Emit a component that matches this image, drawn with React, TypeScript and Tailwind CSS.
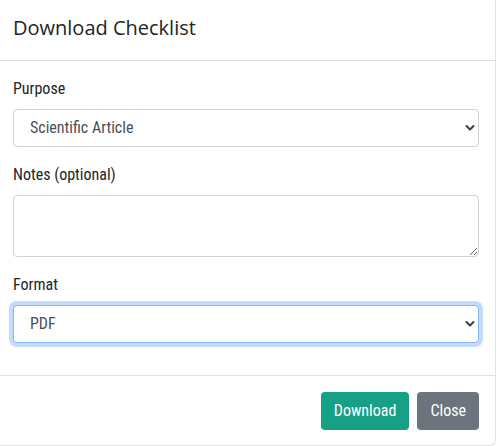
const chevron = (
  <svg className="pointer-events-none absolute right-[4px] top-1/2 -translate-y-1/2" width="10" height="7" viewBox="0 0 10 7" fill="none">
    <path d="M1.5 1.5L5 5l3.5-3.5" stroke="#3c4043" strokeWidth="2" strokeLinecap="round" strokeLinejoin="round" />
  </svg>
);

function Select({ value, focused }: { value: string; focused?: boolean }) {
  return (
    <div className="relative">
      <select
        defaultValue={value}
        className={
          "block h-[38px] w-full appearance-none rounded-[4px] border bg-white pl-4 pr-9 text-base text-[#495057] outline-none " +
          (focused ? "border-[#86b7fe] shadow-[0_0_0_4px_rgba(13,110,253,0.25)]" : "border-[#ced4da]")
        }
      >
        <option>{value}</option>
      </select>
      {chevron}
    </div>
  );
}

export default function App() {
  return (
    <div className="h-[446px] w-[497px] bg-white font-['Roboto_Condensed','Liberation_Sans_Narrow',Roboto,sans-serif] text-[#212529]">
      <div className="h-[446px] w-[496px] rounded-br-[6px] border-r border-b border-[#dee2e6] bg-white">
        <div className="h-[61px] border-b border-[#dee2e6] pt-[13px] pl-[13px]">
          <h5 className="font-['Open_Sans',sans-serif] text-[20px] leading-[30px] font-normal">Download Checklist</h5>
        </div>
        <div className="pt-4 pb-4 pl-[13px] pr-4">
          <div className="mb-4">
            <label className="mb-2 block text-base leading-6">Purpose</label>
            <Select value="Scientific Article" />
          </div>
          <div className="mb-4">
            <label className="mb-2 block text-base leading-6">Notes (optional)</label>
            <textarea className="block h-[62px] w-full rounded-[4px] border border-[#ced4da] bg-white px-3 py-1.5 text-base outline-none" />
          </div>
          <div className="mb-4">
            <label className="mb-2 block text-base leading-6">Format</label>
            <Select value="PDF" focused />
          </div>
        </div>
        <div className="flex justify-end gap-2 border-t border-[#dee2e6] pt-4 pr-4">
          <button className="h-[38px] rounded-[4px] bg-[#16a085] px-[13px] text-base text-white">Download</button>
          <button className="h-[38px] rounded-[4px] bg-[#6c757d] px-[13px] text-base text-white">Close</button>
        </div>
      </div>
    </div>
  );
}
